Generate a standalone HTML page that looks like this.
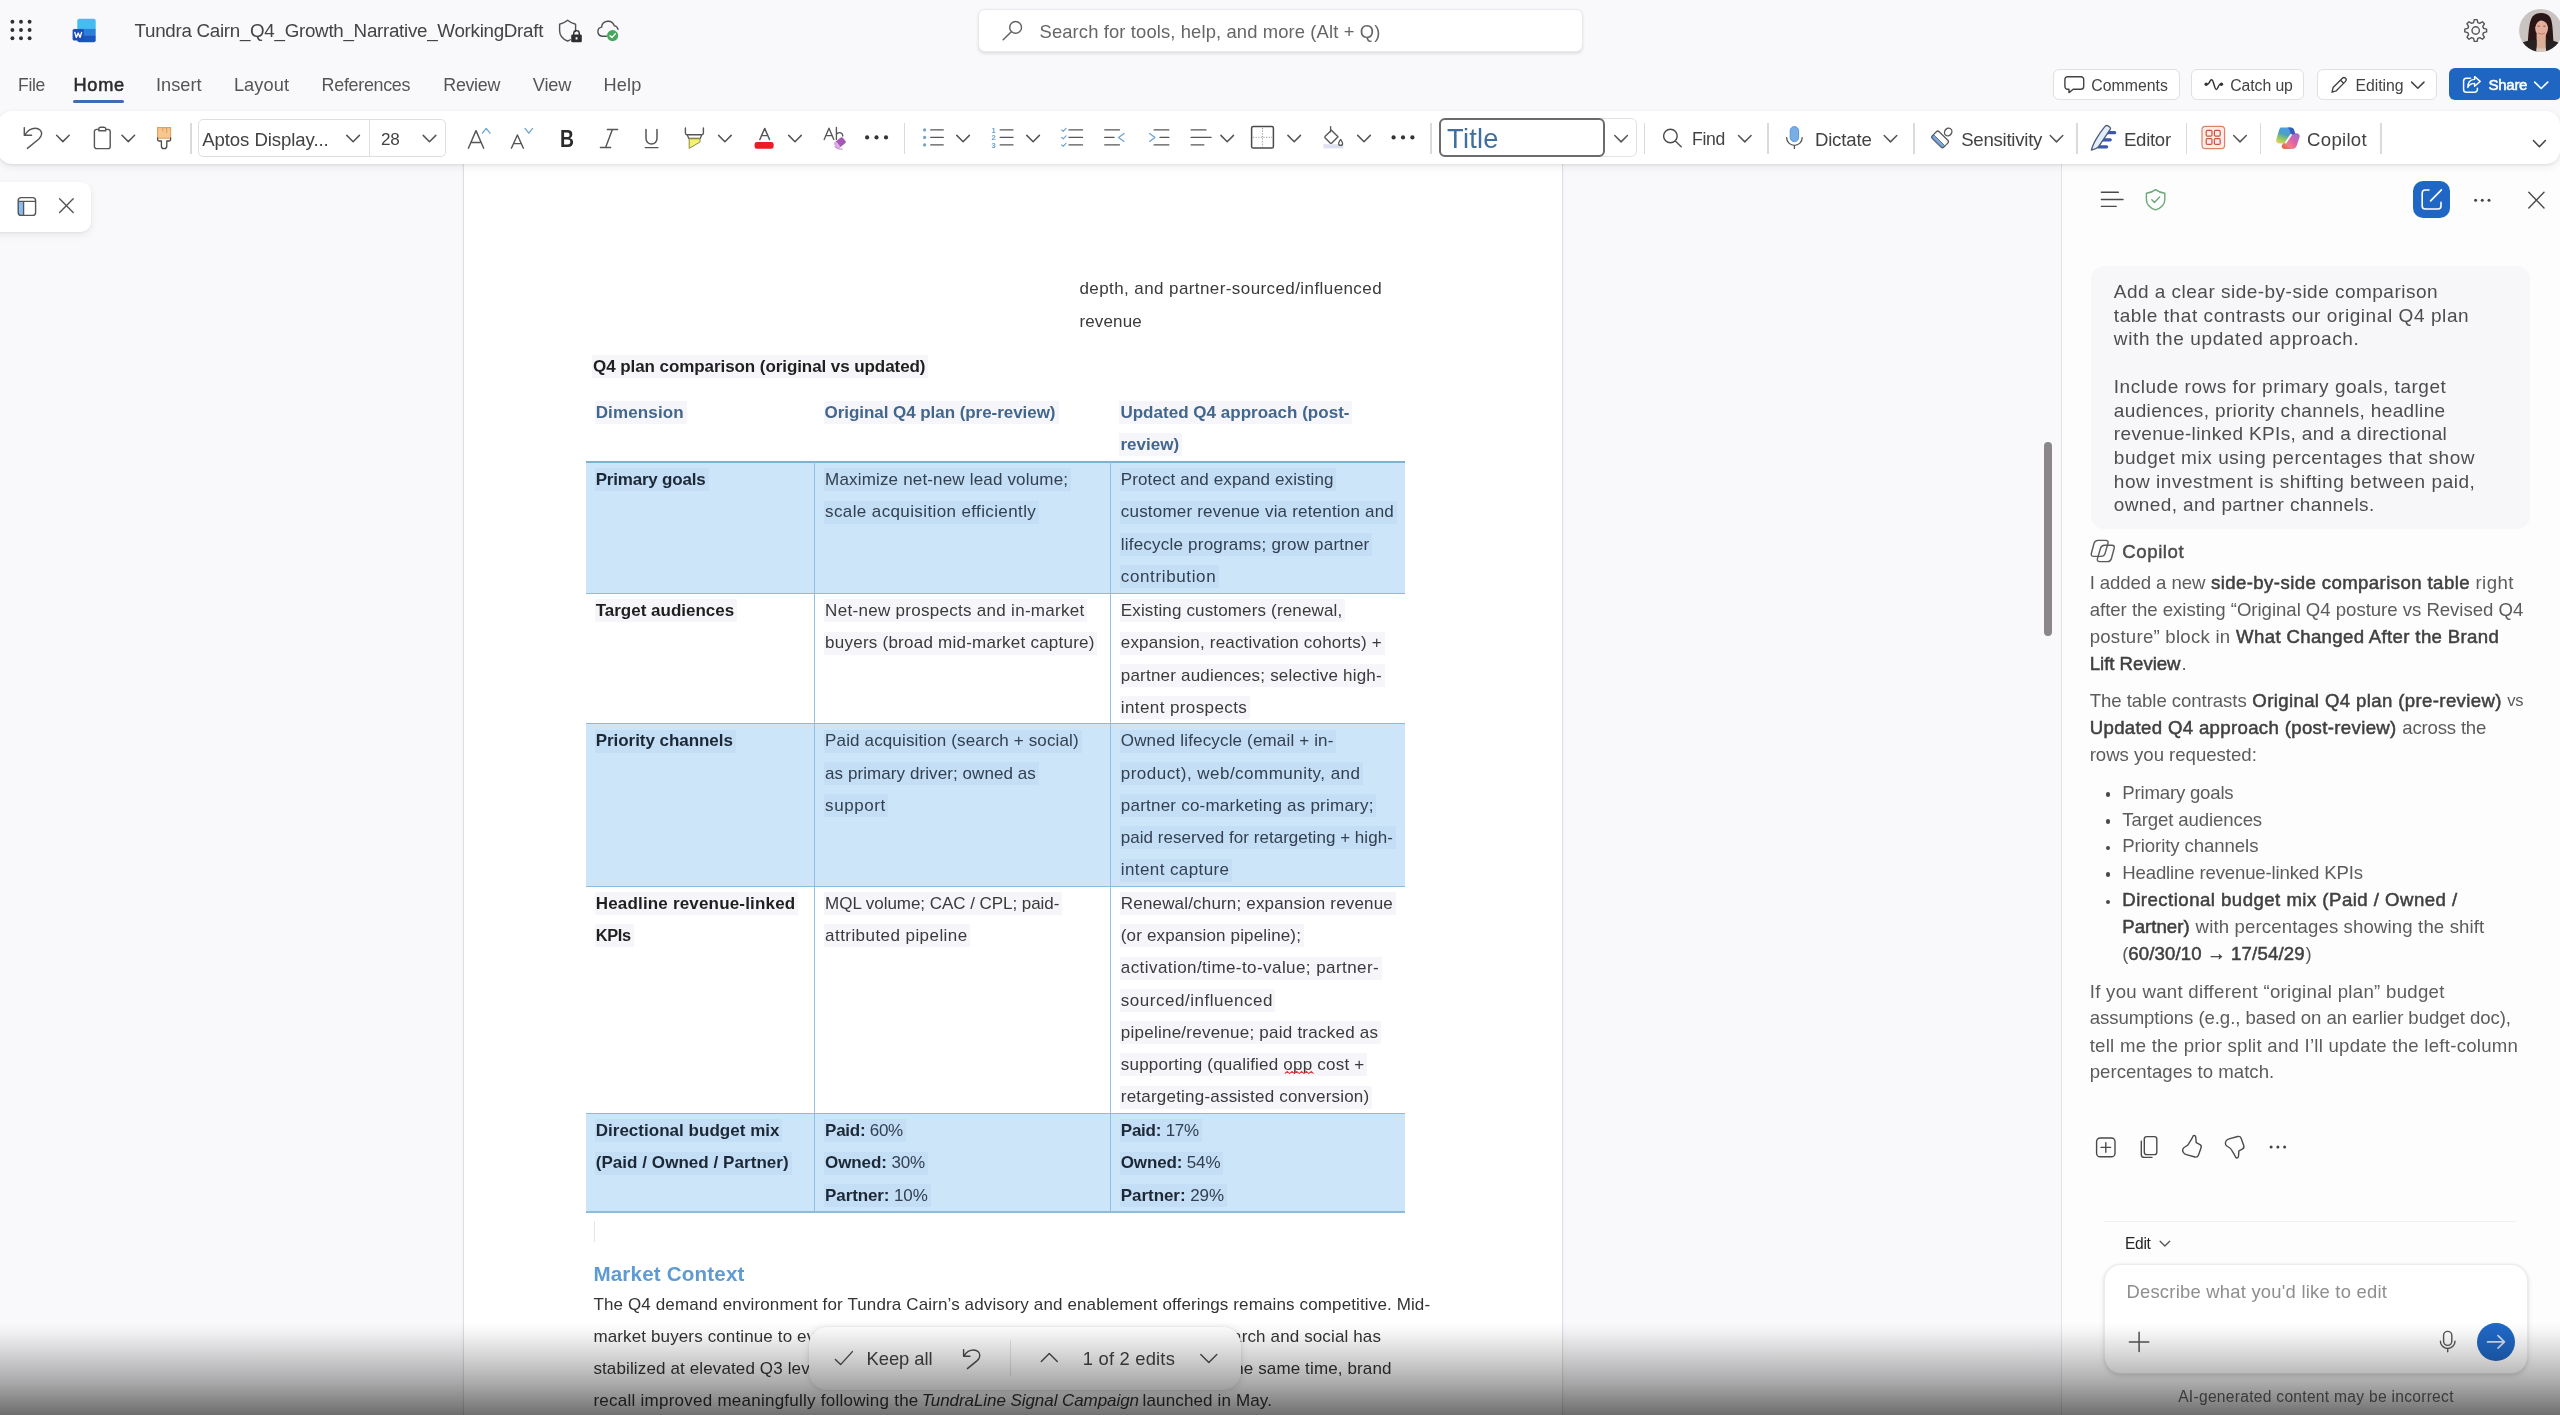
<!DOCTYPE html>
<html lang="en"><head><meta charset="utf-8"><title>Word</title>
<style>
html,body{margin:0;padding:0;background:#f9f9fb;}
body{width:2560px;height:1415px;overflow:hidden;font-family:"Liberation Sans",sans-serif;}
#root{position:relative;width:2560px;height:1415px;overflow:hidden;background:#f9f9fb;filter:blur(.45px);}
.t{position:absolute;white-space:pre;font-family:"Liberation Sans",sans-serif;}
</style></head><body><div id="root">
<div style="position:absolute;left:462.5px;top:150px;width:1100px;height:1300px;background:#fff;border-left:1px solid #dedee2;border-right:1px solid #dedee2;box-sizing:border-box;box-shadow:0 0 3px rgba(0,0,0,.05)"></div>
<div style="position:absolute;left:-12px;top:181.5px;width:103.4px;height:50px;background:#fff;border-radius:10px;box-shadow:0 1px 2px rgba(0,0,0,.05),0 3px 8px rgba(0,0,30,.07)"></div>
<div style="position:absolute;left:2043.8px;top:442.0px;width:8.3px;height:194.0px;background:#8b878b;border-radius:4.2px"></div>
<div class="t" style="left:1079.4px;top:269px;font-size:17.00px;line-height:40px;height:40px;letter-spacing:0.414px;color:#3a3a3a;">depth, and partner-sourced/influenced</div>
<div class="t" style="left:1079.4px;top:302px;font-size:17.00px;line-height:40px;height:40px;letter-spacing:0.161px;color:#3a3a3a;">revenue</div>
<div style="position:absolute;left:592.1px;top:355.4px;width:336.4px;height:23.0px;background:#f6f6fa"></div>
<div class="t" style="left:593.1px;top:347px;font-size:17.00px;line-height:40px;height:40px;letter-spacing:-0.075px;color:#1f1f1f;"><span style="font-weight:700;">Q4 plan comparison (original vs updated)</span></div>
<div style="position:absolute;left:586.0px;top:463.0px;width:819.3px;height:130.4px;background:#cde5f9;"></div>
<div style="position:absolute;left:586.0px;top:723.8px;width:819.3px;height:162.4px;background:#cde5f9;"></div>
<div style="position:absolute;left:586.0px;top:1113.6px;width:819.3px;height:98.4px;background:#cde5f9;"></div>
<div style="position:absolute;left:586.0px;top:460.6px;width:819.3px;height:2.4px;background:#7fb2cf;"></div>
<div style="position:absolute;left:586.0px;top:592.7px;width:819.3px;height:1.4px;background:#8ebbdb;"></div>
<div style="position:absolute;left:586.0px;top:723.1px;width:819.3px;height:1.4px;background:#8ebbdb;"></div>
<div style="position:absolute;left:586.0px;top:885.5px;width:819.3px;height:1.4px;background:#8ebbdb;"></div>
<div style="position:absolute;left:586.0px;top:1112.9px;width:819.3px;height:1.4px;background:#8ebbdb;"></div>
<div style="position:absolute;left:586.0px;top:1211.3px;width:819.3px;height:1.4px;background:#8ebbdb;"></div>
<div style="position:absolute;left:813.9px;top:462.0px;width:1.4px;height:750.0px;background:#93bedd;"></div>
<div style="position:absolute;left:1109.5px;top:462.0px;width:1.4px;height:750.0px;background:#93bedd;"></div>
<div style="position:absolute;left:594.7px;top:400.8px;width:92.0px;height:23.0px;background:#f6f6fa"></div>
<div class="t" style="left:595.7px;top:393px;font-size:17.00px;line-height:40px;height:40px;letter-spacing:0.137px;color:#43678c;"><span style="font-weight:700;">Dimension</span></div>
<div style="position:absolute;left:823.5px;top:400.8px;width:235.0px;height:23.0px;background:#f6f6fa"></div>
<div class="t" style="left:824.5px;top:393px;font-size:17.00px;line-height:40px;height:40px;letter-spacing:-0.050px;color:#43678c;"><span style="font-weight:700;">Original Q4 plan (pre-review)</span></div>
<div style="position:absolute;left:1119.4px;top:400.8px;width:233.1px;height:23.0px;background:#f6f6fa"></div>
<div class="t" style="left:1120.4px;top:393px;font-size:17.00px;line-height:40px;height:40px;letter-spacing:0.021px;color:#43678c;"><span style="font-weight:700;">Updated Q4 approach (post-</span></div>
<div style="position:absolute;left:1119.4px;top:433.0px;width:62.8px;height:23.0px;background:#f6f6fa"></div>
<div class="t" style="left:1120.4px;top:425px;font-size:17.00px;line-height:40px;height:40px;letter-spacing:0.035px;color:#43678c;"><span style="font-weight:700;">review)</span></div>
<div style="position:absolute;left:594.7px;top:468.2px;width:114.0px;height:23.0px;background:#c4def5"></div>
<div class="t" style="left:595.7px;top:460px;font-size:17.00px;line-height:40px;height:40px;letter-spacing:-0.204px;color:#1c2836;"><span style="font-weight:700;">Primary goals</span></div>
<div style="position:absolute;left:824.1px;top:468.2px;width:246.9px;height:23.0px;background:#c4def5"></div>
<div class="t" style="left:825.1px;top:460px;font-size:17.00px;line-height:40px;height:40px;letter-spacing:0.171px;color:#33404f;">Maximize net-new lead volume;</div>
<div style="position:absolute;left:824.1px;top:500.5px;width:214.7px;height:23.0px;background:#c4def5"></div>
<div class="t" style="left:825.1px;top:492px;font-size:17.00px;line-height:40px;height:40px;letter-spacing:0.382px;color:#33404f;">scale acquisition efficiently</div>
<div style="position:absolute;left:1119.8px;top:468.2px;width:216.6px;height:23.0px;background:#c4def5"></div>
<div class="t" style="left:1120.8px;top:460px;font-size:17.00px;line-height:40px;height:40px;letter-spacing:0.108px;color:#33404f;">Protect and expand existing</div>
<div style="position:absolute;left:1119.8px;top:500.5px;width:277.0px;height:23.0px;background:#c4def5"></div>
<div class="t" style="left:1120.8px;top:492px;font-size:17.00px;line-height:40px;height:40px;letter-spacing:0.197px;color:#33404f;">customer revenue via retention and</div>
<div style="position:absolute;left:1119.8px;top:532.8px;width:252.4px;height:23.0px;background:#c4def5"></div>
<div class="t" style="left:1120.8px;top:525px;font-size:17.00px;line-height:40px;height:40px;letter-spacing:0.211px;color:#33404f;">lifecycle programs; grow partner</div>
<div style="position:absolute;left:1119.8px;top:565.0px;width:98.8px;height:23.0px;background:#c4def5"></div>
<div class="t" style="left:1120.8px;top:557px;font-size:17.00px;line-height:40px;height:40px;letter-spacing:0.628px;color:#33404f;">contribution</div>
<div style="position:absolute;left:594.7px;top:599.3px;width:142.5px;height:23.0px;background:#f6f6fa"></div>
<div class="t" style="left:595.7px;top:591px;font-size:17.00px;line-height:40px;height:40px;letter-spacing:-0.004px;color:#1f1f1f;"><span style="font-weight:700;">Target audiences</span></div>
<div style="position:absolute;left:824.1px;top:599.3px;width:263.2px;height:23.0px;background:#f6f6fa"></div>
<div class="t" style="left:825.1px;top:591px;font-size:17.00px;line-height:40px;height:40px;letter-spacing:0.294px;color:#3a3a3a;">Net-new prospects and in-market</div>
<div style="position:absolute;left:824.1px;top:631.5px;width:273.4px;height:23.0px;background:#f6f6fa"></div>
<div class="t" style="left:825.1px;top:623px;font-size:17.00px;line-height:40px;height:40px;letter-spacing:0.240px;color:#3a3a3a;">buyers (broad mid-market capture)</div>
<div style="position:absolute;left:1119.8px;top:599.3px;width:225.4px;height:23.0px;background:#f6f6fa"></div>
<div class="t" style="left:1120.8px;top:591px;font-size:17.00px;line-height:40px;height:40px;letter-spacing:0.152px;color:#3a3a3a;">Existing customers (renewal,</div>
<div style="position:absolute;left:1119.8px;top:631.5px;width:264.8px;height:23.0px;background:#f6f6fa"></div>
<div class="t" style="left:1120.8px;top:623px;font-size:17.00px;line-height:40px;height:40px;letter-spacing:0.186px;color:#3a3a3a;">expansion, reactivation cohorts) +</div>
<div style="position:absolute;left:1119.8px;top:663.7px;width:264.8px;height:23.0px;background:#f6f6fa"></div>
<div class="t" style="left:1120.8px;top:656px;font-size:17.00px;line-height:40px;height:40px;letter-spacing:0.200px;color:#3a3a3a;">partner audiences; selective high-</div>
<div style="position:absolute;left:1119.8px;top:695.8px;width:130.0px;height:23.0px;background:#f6f6fa"></div>
<div class="t" style="left:1120.8px;top:688px;font-size:17.00px;line-height:40px;height:40px;letter-spacing:0.399px;color:#3a3a3a;">intent prospects</div>
<div style="position:absolute;left:594.7px;top:729.6px;width:141.2px;height:23.0px;background:#c4def5"></div>
<div class="t" style="left:595.7px;top:721px;font-size:17.00px;line-height:40px;height:40px;letter-spacing:-0.046px;color:#1c2836;"><span style="font-weight:700;">Priority channels</span></div>
<div style="position:absolute;left:824.1px;top:729.6px;width:257.6px;height:23.0px;background:#c4def5"></div>
<div class="t" style="left:825.1px;top:721px;font-size:17.00px;line-height:40px;height:40px;letter-spacing:0.140px;color:#33404f;">Paid acquisition (search + social)</div>
<div style="position:absolute;left:824.1px;top:761.8px;width:214.7px;height:23.0px;background:#c4def5"></div>
<div class="t" style="left:825.1px;top:754px;font-size:17.00px;line-height:40px;height:40px;letter-spacing:0.073px;color:#33404f;">as primary driver; owned as</div>
<div style="position:absolute;left:824.1px;top:794.0px;width:64.1px;height:23.0px;background:#c4def5"></div>
<div class="t" style="left:825.1px;top:786px;font-size:17.00px;line-height:40px;height:40px;letter-spacing:0.566px;color:#33404f;">support</div>
<div style="position:absolute;left:1119.8px;top:729.6px;width:216.6px;height:23.0px;background:#c4def5"></div>
<div class="t" style="left:1120.8px;top:721px;font-size:17.00px;line-height:40px;height:40px;letter-spacing:0.158px;color:#33404f;">Owned lifecycle (email + in-</div>
<div style="position:absolute;left:1119.8px;top:761.8px;width:243.2px;height:23.0px;background:#c4def5"></div>
<div class="t" style="left:1120.8px;top:754px;font-size:17.00px;line-height:40px;height:40px;letter-spacing:0.472px;color:#33404f;">product), web/community, and</div>
<div style="position:absolute;left:1119.8px;top:794.0px;width:256.6px;height:23.0px;background:#c4def5"></div>
<div class="t" style="left:1120.8px;top:786px;font-size:17.00px;line-height:40px;height:40px;letter-spacing:0.225px;color:#33404f;">partner co-marketing as primary;</div>
<div style="position:absolute;left:1119.8px;top:826.2px;width:276.0px;height:23.0px;background:#c4def5"></div>
<div class="t" style="left:1120.8px;top:818px;font-size:17.00px;line-height:40px;height:40px;letter-spacing:0.035px;color:#33404f;">paid reserved for retargeting + high-</div>
<div style="position:absolute;left:1119.8px;top:858.5px;width:112.2px;height:23.0px;background:#c4def5"></div>
<div class="t" style="left:1120.8px;top:850px;font-size:17.00px;line-height:40px;height:40px;letter-spacing:0.399px;color:#33404f;">intent capture</div>
<div style="position:absolute;left:594.7px;top:892.0px;width:203.5px;height:23.0px;background:#f6f6fa"></div>
<div class="t" style="left:595.7px;top:884px;font-size:17.00px;line-height:40px;height:40px;letter-spacing:0.179px;color:#1f1f1f;"><span style="font-weight:700;">Headline revenue-linked</span></div>
<div style="position:absolute;left:594.7px;top:924.2px;width:39.5px;height:23.0px;background:#f6f6fa"></div>
<div class="t" style="left:595.7px;top:915px;font-size:16.35px;line-height:40px;height:40px;letter-spacing:-0.283px;color:#1f1f1f;"><span style="font-weight:700;">KPIs</span></div>
<div style="position:absolute;left:824.1px;top:892.0px;width:238.3px;height:23.0px;background:#f6f6fa"></div>
<div class="t" style="left:825.1px;top:884px;font-size:17.00px;line-height:40px;height:40px;letter-spacing:-0.047px;color:#3a3a3a;">MQL volume; CAC / CPL; paid-</div>
<div style="position:absolute;left:824.1px;top:924.2px;width:146.1px;height:23.0px;background:#f6f6fa"></div>
<div class="t" style="left:825.1px;top:916px;font-size:17.00px;line-height:40px;height:40px;letter-spacing:0.438px;color:#3a3a3a;">attributed pipeline</div>
<div style="position:absolute;left:1119.8px;top:892.0px;width:276.0px;height:23.0px;background:#f6f6fa"></div>
<div class="t" style="left:1120.8px;top:884px;font-size:17.00px;line-height:40px;height:40px;letter-spacing:0.177px;color:#3a3a3a;">Renewal/churn; expansion revenue</div>
<div style="position:absolute;left:1119.8px;top:924.2px;width:184.1px;height:23.0px;background:#f6f6fa"></div>
<div class="t" style="left:1120.8px;top:916px;font-size:17.00px;line-height:40px;height:40px;letter-spacing:0.147px;color:#3a3a3a;">(or expansion pipeline);</div>
<div style="position:absolute;left:1119.8px;top:956.5px;width:261.9px;height:23.0px;background:#f6f6fa"></div>
<div class="t" style="left:1120.8px;top:948px;font-size:17.00px;line-height:40px;height:40px;letter-spacing:0.428px;color:#3a3a3a;">activation/time-to-value; partner-</div>
<div style="position:absolute;left:1119.8px;top:988.8px;width:155.6px;height:23.0px;background:#f6f6fa"></div>
<div class="t" style="left:1120.8px;top:981px;font-size:17.00px;line-height:40px;height:40px;letter-spacing:0.523px;color:#3a3a3a;">sourced/influenced</div>
<div style="position:absolute;left:1119.8px;top:1021.1px;width:261.2px;height:23.0px;background:#f6f6fa"></div>
<div class="t" style="left:1120.8px;top:1013px;font-size:17.00px;line-height:40px;height:40px;letter-spacing:0.241px;color:#3a3a3a;">pipeline/revenue; paid tracked as</div>
<div style="position:absolute;left:1119.8px;top:1053.4px;width:247.4px;height:23.0px;background:#f6f6fa"></div>
<div class="t" style="left:1120.8px;top:1045px;font-size:17.00px;line-height:40px;height:40px;letter-spacing:0.215px;color:#3a3a3a;">supporting (qualified opp cost +</div>
<div style="position:absolute;left:1119.8px;top:1085.6px;width:252.4px;height:23.0px;background:#f6f6fa"></div>
<div class="t" style="left:1120.8px;top:1077px;font-size:17.00px;line-height:40px;height:40px;letter-spacing:0.210px;color:#3a3a3a;">retargeting-assisted conversion)</div>
<div style="position:absolute;left:594.7px;top:1119.4px;width:187.8px;height:23.0px;background:#c4def5"></div>
<div class="t" style="left:595.7px;top:1111px;font-size:17.00px;line-height:40px;height:40px;letter-spacing:0.026px;color:#1c2836;"><span style="font-weight:700;">Directional budget mix</span></div>
<div style="position:absolute;left:594.7px;top:1151.6px;width:197.0px;height:23.0px;background:#c4def5"></div>
<div class="t" style="left:595.7px;top:1143px;font-size:17.00px;line-height:40px;height:40px;letter-spacing:0.054px;color:#1c2836;"><span style="font-weight:700;">(Paid / Owned / Partner)</span></div>
<div style="position:absolute;left:824.1px;top:1119.4px;width:82.1px;height:23.0px;background:#c4def5"></div>
<div class="t" style="left:825.1px;top:1111px;font-size:17.00px;line-height:40px;height:40px;letter-spacing:-0.276px;color:#33404f;"><span style="font-weight:700;color:#1c2836;">Paid:</span> 60%</div>
<div style="position:absolute;left:824.1px;top:1151.6px;width:104.1px;height:23.0px;background:#c4def5"></div>
<div class="t" style="left:825.1px;top:1143px;font-size:17.00px;line-height:40px;height:40px;letter-spacing:-0.109px;color:#33404f;"><span style="font-weight:700;color:#1c2836;">Owned:</span> 30%</div>
<div style="position:absolute;left:824.1px;top:1183.9px;width:106.7px;height:23.0px;background:#c4def5"></div>
<div class="t" style="left:825.1px;top:1176px;font-size:17.00px;line-height:40px;height:40px;letter-spacing:-0.112px;color:#33404f;"><span style="font-weight:700;color:#1c2836;">Partner:</span> 10%</div>
<div style="position:absolute;left:1119.8px;top:1119.4px;width:82.4px;height:23.0px;background:#c4def5"></div>
<div class="t" style="left:1120.8px;top:1111px;font-size:17.00px;line-height:40px;height:40px;letter-spacing:-0.239px;color:#33404f;"><span style="font-weight:700;color:#1c2836;">Paid:</span> 17%</div>
<div style="position:absolute;left:1119.8px;top:1151.6px;width:103.7px;height:23.0px;background:#c4def5"></div>
<div class="t" style="left:1120.8px;top:1143px;font-size:17.00px;line-height:40px;height:40px;letter-spacing:-0.153px;color:#33404f;"><span style="font-weight:700;color:#1c2836;">Owned:</span> 54%</div>
<div style="position:absolute;left:1119.8px;top:1183.9px;width:107.3px;height:23.0px;background:#c4def5"></div>
<div class="t" style="left:1120.8px;top:1176px;font-size:17.00px;line-height:40px;height:40px;letter-spacing:-0.058px;color:#33404f;"><span style="font-weight:700;color:#1c2836;">Partner:</span> 29%</div>
<div style="position:absolute;left:593.6px;top:1221.0px;width:1.0px;height:21.0px;background:#e4e4e8;"></div>
<div class="t" style="left:593.4px;top:1254px;font-size:20.60px;line-height:40px;height:40px;letter-spacing:0.176px;color:#5f9bd3;"><span style="font-weight:700;">Market Context</span></div>
<div class="t" style="left:593.4px;top:1285px;font-size:17.00px;line-height:40px;height:40px;letter-spacing:0.130px;color:#333;">The Q4 demand environment for Tundra Cairn’s advisory and enablement offerings remains competitive. Mid-</div>
<div class="t" style="left:593.4px;top:1317px;font-size:17.00px;line-height:40px;height:40px;letter-spacing:0.130px;color:#333;">market buyers continue to evaluate</div>
<div class="t" style="left:1213.9px;top:1317px;font-size:17.00px;line-height:40px;height:40px;letter-spacing:0.130px;color:#333;">search and social has</div>
<div class="t" style="left:593.4px;top:1349px;font-size:17.00px;line-height:40px;height:40px;letter-spacing:0.130px;color:#333;">stabilized at elevated Q3 levels</div>
<div class="t" style="left:1229.3px;top:1349px;font-size:17.00px;line-height:40px;height:40px;letter-spacing:0.130px;color:#333;">the same time, brand</div>
<div class="t" style="left:593.4px;top:1381px;font-size:17.00px;line-height:40px;height:40px;letter-spacing:0.250px;color:#333;">recall improved meaningfully following the</div>
<div class="t" style="left:921.8px;top:1381px;font-size:17.00px;line-height:40px;height:40px;letter-spacing:-0.069px;color:#333;"><span style="font-style:italic;">TundraLine Signal Campaign</span></div>
<div class="t" style="left:1142.6px;top:1381px;font-size:17.00px;line-height:40px;height:40px;letter-spacing:0.136px;color:#333;">launched in May.</div>
<svg width="2560" height="1415" viewBox="0 0 2560 1415" style="position:absolute;left:0;top:0;overflow:visible"><clipPath id="np"><rect x="18.2" y="197.6" width="17.4" height="17.8" rx="3"/></clipPath>
<rect x="18" y="201" width="5.6" height="15" fill="#86bcee" clip-path="url(#np)"/>
<rect x="18.2" y="197.6" width="17.4" height="17.8" rx="3" fill="none" stroke="#555" stroke-width="1.4"/>
<path d="M18.4 201.4 H35.4 M23.6 201.4 V215" stroke="#555" stroke-width="1.3" fill="none"/>
<path d="M59.6 198.8 L73.2 212.6 M73.2 198.8 L59.6 212.6" stroke="#555" stroke-width="1.4" stroke-linecap="round"/>
<path d="M1284.8 1073.6 L1287.2 1071.4 L1289.6 1073.6 L1292.0 1071.4 L1294.4 1073.6 L1296.8 1071.4 L1299.2 1073.6 L1301.6 1071.4 L1304.0 1073.6 L1306.4 1071.4 L1308.8 1073.6 L1311.2 1071.4 L1313.6 1073.6" fill="none" stroke="#e0393e" stroke-width="1.1"/></svg>
<div style="position:absolute;left:2060.5px;top:150px;width:520px;height:1300px;background:#fdfdfe;border-left:1px solid #e4e4e8;box-sizing:border-box"></div>
<div style="position:absolute;left:2412.6px;top:180.8px;width:37.4px;height:37.6px;background:#2067c5;border-radius:10px"></div>
<div style="position:absolute;left:2090.6px;top:265.8px;width:439px;height:263px;background:#f7f7f9;border-radius:13px"></div>
<div class="t" style="left:2113.8px;top:272px;font-size:19.00px;line-height:40px;height:40px;letter-spacing:0.482px;color:#4d4d4d;">Add a clear side-by-side comparison</div>
<div class="t" style="left:2113.8px;top:296px;font-size:19.00px;line-height:40px;height:40px;letter-spacing:0.579px;color:#4d4d4d;">table that contrasts our original Q4 plan</div>
<div class="t" style="left:2113.8px;top:319px;font-size:19.00px;line-height:40px;height:40px;letter-spacing:0.631px;color:#4d4d4d;">with the updated approach.</div>
<div class="t" style="left:2113.8px;top:367px;font-size:19.00px;line-height:40px;height:40px;letter-spacing:0.525px;color:#4d4d4d;">Include rows for primary goals, target</div>
<div class="t" style="left:2113.8px;top:391px;font-size:19.00px;line-height:40px;height:40px;letter-spacing:0.364px;color:#4d4d4d;">audiences, priority channels, headline</div>
<div class="t" style="left:2113.8px;top:414px;font-size:19.00px;line-height:40px;height:40px;letter-spacing:0.351px;color:#4d4d4d;">revenue-linked KPIs, and a directional</div>
<div class="t" style="left:2113.8px;top:438px;font-size:19.00px;line-height:40px;height:40px;letter-spacing:0.557px;color:#4d4d4d;">budget mix using percentages that show</div>
<div class="t" style="left:2113.8px;top:462px;font-size:19.00px;line-height:40px;height:40px;letter-spacing:0.539px;color:#4d4d4d;">how investment is shifting between paid,</div>
<div class="t" style="left:2113.8px;top:485px;font-size:19.00px;line-height:40px;height:40px;letter-spacing:0.373px;color:#4d4d4d;">owned, and partner channels.</div>
<div class="t" style="left:2122.3px;top:532px;font-size:18.60px;line-height:40px;height:40px;letter-spacing:0.584px;color:#4c4c4c;-webkit-text-stroke:.45px #4c4c4c;">Copilot</div>
<div class="t" style="left:2089.7px;top:563px;font-size:18.60px;line-height:40px;height:40px;letter-spacing:-0.097px;color:#5c5c5c;">I added a new</div>
<div class="t" style="left:2211.0px;top:563px;font-size:18.60px;line-height:40px;height:40px;letter-spacing:0.411px;color:#404040;-webkit-text-stroke:.5px #404040;">side-by-side comparison table</div>
<div class="t" style="left:2475.4px;top:563px;font-size:18.60px;line-height:40px;height:40px;letter-spacing:0.479px;color:#5c5c5c;">right</div>
<div class="t" style="left:2089.7px;top:590px;font-size:18.60px;line-height:40px;height:40px;letter-spacing:-0.029px;color:#5c5c5c;">after the existing “Original Q4 posture vs Revised Q4</div>
<div class="t" style="left:2089.7px;top:617px;font-size:18.60px;line-height:40px;height:40px;letter-spacing:0.252px;color:#5c5c5c;">posture” block in</div>
<div class="t" style="left:2236.1px;top:617px;font-size:18.60px;line-height:40px;height:40px;letter-spacing:0.351px;color:#404040;-webkit-text-stroke:.5px #404040;">What Changed After the Brand</div>
<div class="t" style="left:2089.7px;top:644px;font-size:18.60px;line-height:40px;height:40px;letter-spacing:-0.007px;color:#404040;-webkit-text-stroke:.5px #404040;">Lift Review</div>
<div class="t" style="left:2181.6px;top:644px;font-size:18.60px;line-height:40px;height:40px;letter-spacing:0.000px;color:#5c5c5c;">.</div>
<div class="t" style="left:2089.7px;top:681px;font-size:18.60px;line-height:40px;height:40px;letter-spacing:-0.060px;color:#5c5c5c;">The table contrasts</div>
<div class="t" style="left:2252.3px;top:681px;font-size:18.60px;line-height:40px;height:40px;letter-spacing:0.375px;color:#404040;-webkit-text-stroke:.5px #404040;">Original Q4 plan (pre-review)</div>
<div class="t" style="left:2507.2px;top:680px;font-size:16.50px;line-height:40px;height:40px;letter-spacing:-0.300px;color:#5c5c5c;">vs</div>
<div class="t" style="left:2089.7px;top:708px;font-size:18.60px;line-height:40px;height:40px;letter-spacing:0.344px;color:#404040;-webkit-text-stroke:.5px #404040;">Updated Q4 approach (post-review)</div>
<div class="t" style="left:2402.3px;top:708px;font-size:18.60px;line-height:40px;height:40px;letter-spacing:-0.190px;color:#5c5c5c;">across the</div>
<div class="t" style="left:2089.7px;top:735px;font-size:18.60px;line-height:40px;height:40px;letter-spacing:-0.016px;color:#5c5c5c;">rows you requested:</div>
<div class="t" style="left:2122.3px;top:773px;font-size:18.60px;line-height:40px;height:40px;letter-spacing:-0.192px;color:#5c5c5c;">Primary goals</div>
<div class="t" style="left:2122.3px;top:800px;font-size:18.60px;line-height:40px;height:40px;letter-spacing:-0.117px;color:#5c5c5c;">Target audiences</div>
<div class="t" style="left:2122.3px;top:826px;font-size:18.60px;line-height:40px;height:40px;letter-spacing:-0.081px;color:#5c5c5c;">Priority channels</div>
<div class="t" style="left:2122.3px;top:853px;font-size:18.60px;line-height:40px;height:40px;letter-spacing:-0.157px;color:#5c5c5c;">Headline revenue-linked KPIs</div>
<div class="t" style="left:2122.3px;top:880px;font-size:18.60px;line-height:40px;height:40px;letter-spacing:0.476px;color:#404040;-webkit-text-stroke:.5px #404040;">Directional budget mix (Paid / Owned /</div>
<div class="t" style="left:2122.3px;top:907px;font-size:18.60px;line-height:40px;height:40px;letter-spacing:0.016px;color:#404040;-webkit-text-stroke:.5px #404040;">Partner)</div>
<div class="t" style="left:2195.6px;top:907px;font-size:18.60px;line-height:40px;height:40px;letter-spacing:0.135px;color:#5c5c5c;">with percentages showing the shift</div>
<div class="t" style="left:2122.3px;top:934px;font-size:18.60px;line-height:40px;height:40px;letter-spacing:0.000px;color:#5c5c5c;">(</div>
<div class="t" style="left:2128.2px;top:934px;font-size:18.60px;line-height:40px;height:40px;letter-spacing:0.148px;color:#404040;-webkit-text-stroke:.5px #404040;">60/30/10 → 17/54/29</div>
<div class="t" style="left:2305.6px;top:934px;font-size:18.60px;line-height:40px;height:40px;letter-spacing:0.000px;color:#5c5c5c;">)</div>
<div style="position:absolute;left:2105.6px;top:792.2px;width:4.8px;height:4.8px;background:#4a4a4a;border-radius:50%"></div>
<div style="position:absolute;left:2105.6px;top:819.0px;width:4.8px;height:4.8px;background:#4a4a4a;border-radius:50%"></div>
<div style="position:absolute;left:2105.6px;top:845.7px;width:4.8px;height:4.8px;background:#4a4a4a;border-radius:50%"></div>
<div style="position:absolute;left:2105.6px;top:872.4px;width:4.8px;height:4.8px;background:#4a4a4a;border-radius:50%"></div>
<div style="position:absolute;left:2105.6px;top:899.5px;width:4.8px;height:4.8px;background:#4a4a4a;border-radius:50%"></div>
<div class="t" style="left:2089.7px;top:972px;font-size:18.60px;line-height:40px;height:40px;letter-spacing:0.300px;color:#5c5c5c;">If you want different “original plan” budget</div>
<div class="t" style="left:2089.7px;top:998px;font-size:18.60px;line-height:40px;height:40px;letter-spacing:-0.071px;color:#5c5c5c;">assumptions (e.g., based on an earlier budget doc),</div>
<div class="t" style="left:2089.7px;top:1026px;font-size:18.60px;line-height:40px;height:40px;letter-spacing:0.254px;color:#5c5c5c;">tell me the prior split and I’ll update the left-column</div>
<div class="t" style="left:2089.7px;top:1052px;font-size:18.60px;line-height:40px;height:40px;letter-spacing:0.028px;color:#5c5c5c;">percentages to match.</div>
<div style="position:absolute;left:2104.0px;top:1221.4px;width:412.0px;height:1.0px;background:#f0f0f3;"></div>
<div class="t" style="left:2124.9px;top:1224px;font-size:15.60px;line-height:40px;height:40px;letter-spacing:-0.294px;color:#242424;">Edit</div>
<div style="position:absolute;left:2104px;top:1264px;width:424px;height:110px;background:#fff;border-radius:17px;border:1px solid #ececf0;box-sizing:border-box;box-shadow:0 2px 5px rgba(0,0,0,.13),0 0 2px rgba(0,0,0,.06)"></div>
<div class="t" style="left:2126.4px;top:1272px;font-size:18.40px;line-height:40px;height:40px;letter-spacing:0.243px;color:#8e8e8e;">Describe what you'd like to edit</div>
<div style="position:absolute;left:2477px;top:1323px;width:37.8px;height:37.8px;border-radius:50%;background:#2067c5"></div>
<div class="t" style="left:2178.2px;top:1377px;font-size:15.60px;line-height:40px;height:40px;letter-spacing:0.279px;color:#666;">AI-generated content may be incorrect</div>
<svg width="2560" height="1415" viewBox="0 0 2560 1415" style="position:absolute;left:0;top:0;overflow:visible"><path d="M2101.4 192.2 H2118.4 M2101.4 199.5 H2123 M2101.4 206.4 H2116.2" fill="none" stroke="#4a4a4a" stroke-width="1.40" stroke-linecap="round" stroke-linejoin="round" />
<path d="M2155.6 189.6 C2158.4 191.8 2161.2 192.8 2164.8 193.2 V199.4 C2164.8 204.4 2161.6 207.8 2155.6 209.8 C2149.6 207.8 2146.4 204.4 2146.4 199.4 V193.2 C2150 192.8 2152.8 191.8 2155.6 189.6 Z" fill="none" stroke="#6aa874" stroke-width="1.40" stroke-linecap="round" stroke-linejoin="round" />
<path d="M2151.8 199.8 L2154.4 202.4 L2159.6 197" fill="none" stroke="#6aa874" stroke-width="1.40" stroke-linecap="round" stroke-linejoin="round" />
<path d="M2429 190 H2425.2 A3 3 0 0 0 2422.2 193 V206 A3 3 0 0 0 2425.2 209 H2438 A3 3 0 0 0 2441 206 V202.4" fill="none" stroke="#fff" stroke-width="1.60" stroke-linecap="round" stroke-linejoin="round" />
<path d="M2430.6 200.8 L2441.4 189.8" fill="none" stroke="#fff" stroke-width="1.70" stroke-linecap="round" stroke-linejoin="round" />
<circle cx="2475.6" cy="200.2" r="1.5" fill="#444"/>
<circle cx="2482.3" cy="200.2" r="1.5" fill="#444"/>
<circle cx="2489.0" cy="200.2" r="1.5" fill="#444"/>
<path d="M2528.8 192.2 L2544 208 M2544 192.2 L2528.8 208" fill="none" stroke="#4a4a4a" stroke-width="1.40" stroke-linecap="round" stroke-linejoin="round" />
<path d="M2093.99 543.50 Q2094.80 540.40 2098.00 540.40 L2105.60 540.40 Q2108.80 540.40 2107.92 543.48 L2105.08 553.32 Q2104.20 556.40 2101.00 556.40 L2093.80 556.40 Q2090.60 556.40 2091.41 553.30 Z" fill="none" stroke="#5a5a5a" stroke-width="1.40" stroke-linecap="round" stroke-linejoin="round" />
<path d="M2100.50 548.27 Q2101.40 545.20 2104.60 545.20 L2111.80 545.20 Q2115.00 545.20 2114.17 548.29 L2111.43 558.51 Q2110.60 561.60 2107.40 561.60 L2099.80 561.60 Q2096.60 561.60 2097.50 558.53 Z" fill="none" stroke="#5a5a5a" stroke-width="1.40" stroke-linecap="round" stroke-linejoin="round" />
<rect x="2096.6" y="1138" width="18.4" height="18.8" rx="3.6" fill="none" stroke="#4a4a4a" stroke-width="1.4"/>
<path d="M2105.8 1142.6 V1152.2 M2101 1147.4 H2110.6" fill="none" stroke="#4a4a4a" stroke-width="1.40" stroke-linecap="round" stroke-linejoin="round" />
<rect x="2144.3" y="1136.6" width="12.5" height="18" rx="2.4" fill="none" stroke="#4a4a4a" stroke-width="1.4"/>
<path d="M2141.3 1141.2 V1154.4 A3 3 0 0 0 2144.3 1157.4 H2152" fill="none" stroke="#4a4a4a" stroke-width="1.40" stroke-linecap="round" stroke-linejoin="round" />
<path d="M2192.6 1137 C2193.2 1135 2195.6 1135 2195.8 1137.4 L2196.2 1142.6 L2199.6 1144.4 C2201.2 1145.2 2201.6 1146.4 2201 1148 L2198.4 1155.2 C2197.8 1156.8 2196.6 1157.4 2195 1157 L2186.4 1154.6 C2183.4 1153.8 2182 1151 2183 1148.8 C2184 1146.6 2187.4 1146.4 2188.6 1144 C2190 1141.4 2191.6 1139.6 2192.6 1137 Z" fill="none" stroke="#4a4a4a" stroke-width="1.40" stroke-linecap="round" stroke-linejoin="round" />
<g transform="translate(2234.5 1147.3) scale(1 -1) translate(-2191.8 -1146.2)"><path d="M2192.6 1137 C2193.2 1135 2195.6 1135 2195.8 1137.4 L2196.2 1142.6 L2199.6 1144.4 C2201.2 1145.2 2201.6 1146.4 2201 1148 L2198.4 1155.2 C2197.8 1156.8 2196.6 1157.4 2195 1157 L2186.4 1154.6 C2183.4 1153.8 2182 1151 2183 1148.8 C2184 1146.6 2187.4 1146.4 2188.6 1144 C2190 1141.4 2191.6 1139.6 2192.6 1137 Z" fill="none" stroke="#4a4a4a" stroke-width="1.40" stroke-linecap="round" stroke-linejoin="round" /></g>
<circle cx="2271.1" cy="1147" r="1.5" fill="#444"/>
<circle cx="2277.9" cy="1147" r="1.5" fill="#444"/>
<circle cx="2284.6" cy="1147" r="1.5" fill="#444"/>
<path d="M2160.1 1241.2 L2164.9 1246.0 L2169.7 1241.2" fill="none" stroke="#555" stroke-width="1.30" stroke-linecap="round" stroke-linejoin="round"/>
<path d="M2139.1 1332.2 V1351.6 M2129.4 1341.9 H2148.8" fill="none" stroke="#555" stroke-width="1.50" stroke-linecap="round" stroke-linejoin="round" />
<rect x="2443.6" y="1331.4" width="8.2" height="14" rx="4.1" fill="none" stroke="#555" stroke-width="1.4"/>
<path d="M2440.4 1341.2 A7.3 7.3 0 0 0 2455 1341.2 M2447.7 1348.6 V1351.8" fill="none" stroke="#555" stroke-width="1.40" stroke-linecap="round" stroke-linejoin="round" />
<path d="M2487.6 1341.9 H2504 M2498 1335.6 L2504.4 1341.9 L2498 1348.2" fill="none" stroke="#cfe0fa" stroke-width="1.70" stroke-linecap="round" stroke-linejoin="round" /></svg>
<div class="t" style="left:134.5px;top:11px;font-size:18.80px;line-height:40px;height:40px;letter-spacing:-0.292px;color:#444;">Tundra Cairn_Q4_Growth_Narrative_WorkingDraft</div>
<div style="position:absolute;left:978px;top:8.5px;width:605px;height:43.5px;background:#fff;border:1px solid #e9e9ee;border-radius:7px;box-shadow:0 1.5px 3px rgba(0,0,0,.10);box-sizing:border-box"></div>
<div class="t" style="left:1039.5px;top:12px;font-size:18.40px;line-height:40px;height:40px;letter-spacing:0.123px;color:#666;">Search for tools, help, and more (Alt + Q)</div>
<div class="t" style="left:18.0px;top:65px;font-size:17.50px;line-height:40px;height:40px;letter-spacing:-0.300px;color:#555;">File</div>
<div class="t" style="left:73.4px;top:65px;font-size:18.20px;line-height:40px;height:40px;letter-spacing:0.751px;color:#2b2b2b;-webkit-text-stroke:.55px #2b2b2b;">Home</div>
<div class="t" style="left:155.9px;top:65px;font-size:18.20px;line-height:40px;height:40px;letter-spacing:0.036px;color:#555;">Insert</div>
<div class="t" style="left:233.9px;top:65px;font-size:18.20px;line-height:40px;height:40px;letter-spacing:0.091px;color:#555;">Layout</div>
<div class="t" style="left:321.6px;top:65px;font-size:17.90px;line-height:40px;height:40px;letter-spacing:-0.293px;color:#555;">References</div>
<div class="t" style="left:443.3px;top:65px;font-size:17.85px;line-height:40px;height:40px;letter-spacing:-0.305px;color:#555;">Review</div>
<div class="t" style="left:532.8px;top:65px;font-size:18.20px;line-height:40px;height:40px;letter-spacing:-0.173px;color:#555;">View</div>
<div class="t" style="left:603.4px;top:65px;font-size:18.20px;line-height:40px;height:40px;letter-spacing:0.156px;color:#555;">Help</div>
<div style="position:absolute;left:73.0px;top:100.2px;width:51.3px;height:2.8px;background:#3f6db5;border-radius:1.5px"></div>
<div style="position:absolute;left:2052.6px;top:68.6px;width:127.2px;height:31.2px;background:#fff;border:1px solid #dfdfe4;border-radius:6px;box-sizing:border-box"></div>
<div style="position:absolute;left:2191.3px;top:68.6px;width:113.2px;height:31.2px;background:#fff;border:1px solid #dfdfe4;border-radius:6px;box-sizing:border-box"></div>
<div style="position:absolute;left:2316.7px;top:68.6px;width:120.8px;height:31.2px;background:#fff;border:1px solid #dfdfe4;border-radius:6px;box-sizing:border-box"></div>
<div style="position:absolute;left:2449.3px;top:68.4px;width:111.9px;height:31.6px;background:#1f66c3;border-radius:6px"></div>
<div class="t" style="left:2091.2px;top:66px;font-size:15.80px;line-height:40px;height:40px;letter-spacing:0.059px;color:#424242;">Comments</div>
<div class="t" style="left:2230.3px;top:66px;font-size:15.80px;line-height:40px;height:40px;letter-spacing:-0.091px;color:#424242;">Catch up</div>
<div class="t" style="left:2355.5px;top:66px;font-size:15.80px;line-height:40px;height:40px;letter-spacing:-0.035px;color:#424242;">Editing</div>
<div class="t" style="left:2488.5px;top:65px;font-size:15.05px;line-height:40px;height:40px;letter-spacing:-0.290px;color:#fff;-webkit-text-stroke:.5px #fff;">Share</div>
<svg width="2560" height="1415" viewBox="0 0 2560 1415" style="position:absolute;left:0;top:0;overflow:visible"><circle cx="12.4" cy="21.8" r="1.95" fill="#303030"/>
<circle cx="12.4" cy="30.0" r="1.95" fill="#303030"/>
<circle cx="12.4" cy="38.2" r="1.95" fill="#303030"/>
<circle cx="21.0" cy="21.8" r="1.95" fill="#303030"/>
<circle cx="21.0" cy="30.0" r="1.95" fill="#303030"/>
<circle cx="21.0" cy="38.2" r="1.95" fill="#303030"/>
<circle cx="29.6" cy="21.8" r="1.95" fill="#303030"/>
<circle cx="29.6" cy="30.0" r="1.95" fill="#303030"/>
<circle cx="29.6" cy="38.2" r="1.95" fill="#303030"/>
<g><clipPath id="wc"><rect x="77.3" y="18.8" width="18.4" height="23.4" rx="2"/></clipPath><g clip-path="url(#wc)"><rect x="77" y="18" width="19" height="11" fill="#45bdf0"/><rect x="77" y="28.9" width="19" height="6.4" fill="#2c7fd8"/><rect x="77" y="35.2" width="19" height="8" fill="#1a56c0"/></g><rect x="72.6" y="28.9" width="11.2" height="11.6" rx="1.6" fill="#1d4dbc"/><path d="M74.8 32.4 L76.3 37.4 L78.2 33 L80.1 37.4 L81.6 32.4" fill="none" stroke="#fff" stroke-width="1.35" stroke-linejoin="round" stroke-linecap="round"/></g>
<path d="M575.6 31.5 V24.2 C572.5 23.6 570 22.2 567.6 20.2 C565.2 22.2 562.7 23.6 559.6 24.2 V30.5 C559.6 35.6 562.7 39.2 567.6 41 C568.6 40.6 569.5 40.2 570.2 39.7" fill="none" stroke="#505050" stroke-width="1.4" stroke-linejoin="round" stroke-linecap="round"/>
<path d="M573.7 35 V33.4 A2.8 2.8 0 0 1 579.3 33.4 V35" fill="none" stroke="#2e2e2e" stroke-width="1.4"/>
<rect x="571.2" y="34.6" width="10.6" height="7.6" rx="1.3" fill="#2e2e2e"/><rect x="575.6" y="37.2" width="1.9" height="2.3" fill="#f4f4f6"/>
<path d="M606.5 36.2 H602.2 A4.6 4.6 0 0 1 601.6 27.1 A6.5 6.5 0 0 1 614.2 25.6 A4.9 4.9 0 0 1 618 29.4" fill="none" stroke="#505050" stroke-width="1.4" stroke-linecap="round"/>
<circle cx="612.6" cy="35.6" r="5.6" fill="#43a85a"/><path d="M610 35.8 L611.9 37.6 L615.3 33.8" fill="none" stroke="#fff" stroke-width="1.4" stroke-linecap="round" stroke-linejoin="round"/>
<circle cx="1015.6" cy="27.4" r="5.9" fill="none" stroke="#616161" stroke-width="1.4"/><path d="M1011.3 31.8 L1003.2 39.8" stroke="#616161" stroke-width="1.5" stroke-linecap="round"/>
<path d="M2486.61 29.07 L2486.61 31.93 L2483.62 32.61 L2482.79 34.61 L2484.42 37.20 L2482.40 39.22 L2479.81 37.59 L2477.81 38.42 L2477.13 41.41 L2474.27 41.41 L2473.59 38.42 L2471.59 37.59 L2469.00 39.22 L2466.98 37.20 L2468.61 34.61 L2467.78 32.61 L2464.79 31.93 L2464.79 29.07 L2467.78 28.39 L2468.61 26.39 L2466.98 23.80 L2469.00 21.78 L2471.59 23.41 L2473.59 22.58 L2474.27 19.59 L2477.13 19.59 L2477.81 22.58 L2479.81 23.41 L2482.40 21.78 L2484.42 23.80 L2482.79 26.39 L2483.62 28.39 Z" fill="none" stroke="#555" stroke-width="1.4" stroke-linejoin="round"/>
<circle cx="2475.7" cy="30.5" r="3.7" fill="none" stroke="#555" stroke-width="1.4"/>
<g><clipPath id="av"><circle cx="2540.6" cy="30.4" r="21.5"/></clipPath><filter id="avf" x="-10%" y="-10%" width="120%" height="120%"><feGaussianBlur stdDeviation=".7"/></filter><circle cx="2540.6" cy="30.4" r="21.5" fill="#c9c3c1"/><g clip-path="url(#av)"><g filter="url(#avf)"><path d="M2527.5 46 C2528.5 36 2528.5 22 2532.5 16.5 C2536.5 11.8 2546.5 11.8 2550 17 C2553.5 23 2552.4 36 2554 46 Z" fill="#2a1613"/><path d="M2536.6 34 L2536.4 52 H2546 L2545.8 34 Z" fill="#dcae98"/><ellipse cx="2541.6" cy="27.6" rx="6.5" ry="9.4" fill="#e4ae9c"/><path d="M2534.4 30 C2533.6 21.5 2537 16.6 2542 16.6 C2547 16.8 2549.4 21 2548.6 29 C2547.6 23.6 2545.4 20.6 2541 20.4 C2537.4 20.8 2535.6 24.6 2534.4 30 Z" fill="#2a1613"/><path d="M2538.2 33 Q2541.6 35.4 2545 33" fill="none" stroke="#b8705e" stroke-width=".9"/><path d="M2537.6 26.2 H2539.8 M2543.4 26.2 H2545.6" stroke="#7a4a40" stroke-width=".9"/><path d="M2520 54 L2522.6 42.4 C2527 40.6 2532 39.8 2536.6 39.4 L2536.6 54 Z" fill="#262120"/><path d="M2561 54 L2558.4 42.4 C2554.6 40.8 2550.4 39.8 2545.8 39.4 L2545.8 54 Z" fill="#262120"/><path d="M2536.4 48.4 H2546 V54 H2536.4 Z" fill="#d8c6ba"/></g></g></g>
<path d="M2067.6 76.7 H2081 A2.7 2.7 0 0 1 2083.7 79.4 V86.6 A2.7 2.7 0 0 1 2081 89.3 H2073.2 L2069 92.6 V89.3 H2067.6 A2.7 2.7 0 0 1 2064.9 86.6 V79.4 A2.7 2.7 0 0 1 2067.6 76.7 Z" fill="none" stroke="#424242" stroke-width="1.4" stroke-linejoin="round"/>
<circle cx="2206.2" cy="84.2" r="1.7" fill="#333"/><circle cx="2221.4" cy="84.2" r="1.7" fill="#333"/><path d="M2207.5 84.2 C2209.5 84 2209.8 79.8 2211.6 79.8 C2213.8 79.8 2214.2 89.4 2216.4 89.4 C2218 89.4 2218.3 84.4 2220.2 84.2" fill="none" stroke="#333" stroke-width="1.5" stroke-linecap="round"/>
<path d="M2332 92.2 L2333.1 87.6 L2342.4 78.3 A2.1 2.1 0 0 1 2345.5 81.4 L2336.3 90.8 Z M2340.6 80.2 L2343.6 83.2" fill="none" stroke="#424242" stroke-width="1.35" stroke-linejoin="round"/>
<path d="M2411.6 82.1 L2417.8 88.3 L2424.0 82.1" fill="none" stroke="#424242" stroke-width="1.50" stroke-linecap="round" stroke-linejoin="round"/>
<path d="M2470.5 78.2 H2466.4 A2.8 2.8 0 0 0 2463.6 81 V89.4 A2.8 2.8 0 0 0 2466.4 92.2 H2474.6 A2.8 2.8 0 0 0 2477.4 89.4 V88.2" fill="none" stroke="#fff" stroke-width="1.5" stroke-linecap="round"/><path d="M2474.6 76.6 L2480.2 81.4 L2474.6 86.2 V83.4 C2471 83.4 2469.2 84.6 2467.8 87.4 C2467.8 82.4 2470.4 79.6 2474.6 79.4 Z" fill="none" stroke="#fff" stroke-width="1.4" stroke-linejoin="round"/>
<path d="M2534.7 82.1 L2541.2 88.5 L2547.7 82.1" fill="none" stroke="#fff" stroke-width="1.70" stroke-linecap="round" stroke-linejoin="round"/></svg>
<div style="position:absolute;left:-2px;top:111.3px;width:2562px;height:52.6px;background:#fff;border-radius:14px;box-shadow:0 1px 3px rgba(0,0,0,.08),0 3px 8px rgba(0,0,20,.07)"></div>
<div style="position:absolute;left:197.7px;top:119.4px;width:248.8px;height:37.3px;border:1px solid #dedee3;border-radius:5px;box-sizing:border-box;background:#fff"></div>
<div style="position:absolute;left:369.3px;top:120.0px;width:1.0px;height:36.2px;background:#e0e0e4;"></div>
<div class="t" style="left:202.2px;top:120px;font-size:18.60px;line-height:40px;height:40px;letter-spacing:-0.083px;color:#424242;">Aptos Display...</div>
<div class="t" style="left:381.0px;top:119px;font-size:17.15px;line-height:40px;height:40px;letter-spacing:-0.276px;color:#424242;">28</div>
<div style="position:absolute;left:190.1px;top:122.5px;width:1.6px;height:31.5px;background:#dadade;"></div>
<div style="position:absolute;left:903.9px;top:122.5px;width:1.6px;height:31.5px;background:#dadade;"></div>
<div style="position:absolute;left:1430.3px;top:122.5px;width:1.6px;height:31.5px;background:#dadade;"></div>
<div style="position:absolute;left:1643.9px;top:122.5px;width:1.6px;height:31.5px;background:#dadade;"></div>
<div style="position:absolute;left:1767.0px;top:122.5px;width:1.6px;height:31.5px;background:#dadade;"></div>
<div style="position:absolute;left:1913.0px;top:122.5px;width:1.6px;height:31.5px;background:#dadade;"></div>
<div style="position:absolute;left:2076.2px;top:122.5px;width:1.6px;height:31.5px;background:#dadade;"></div>
<div style="position:absolute;left:2185.9px;top:122.5px;width:1.6px;height:31.5px;background:#dadade;"></div>
<div style="position:absolute;left:2259.7px;top:122.5px;width:1.6px;height:31.5px;background:#dadade;"></div>
<div style="position:absolute;left:2380.3px;top:122.5px;width:1.6px;height:31.5px;background:#dadade;"></div>
<div style="position:absolute;left:1438.6px;top:118.2px;width:198.8px;height:39.2px;border:1px solid #e2e2e6;border-radius:6px;box-sizing:border-box;background:#fff"></div>
<div style="position:absolute;left:1438.6px;top:118.2px;width:166px;height:39.2px;border:2px solid #6b6b6b;border-radius:6px;box-sizing:border-box;background:#fff"></div>
<div class="t" style="left:1447.0px;top:119px;font-size:27.20px;line-height:40px;height:40px;letter-spacing:0.281px;color:#3f6f9c;">Title</div>
<div class="t" style="left:1692.1px;top:119px;font-size:17.60px;line-height:40px;height:40px;letter-spacing:-0.313px;color:#424242;">Find</div>
<div class="t" style="left:1814.9px;top:120px;font-size:18.60px;line-height:40px;height:40px;letter-spacing:-0.165px;color:#424242;">Dictate</div>
<div class="t" style="left:1961.2px;top:120px;font-size:18.60px;line-height:40px;height:40px;letter-spacing:-0.253px;color:#424242;">Sensitivity</div>
<div class="t" style="left:2124.0px;top:120px;font-size:18.60px;line-height:40px;height:40px;letter-spacing:-0.298px;color:#424242;">Editor</div>
<div class="t" style="left:2307.1px;top:120px;font-size:18.60px;line-height:40px;height:40px;letter-spacing:0.267px;color:#424242;">Copilot</div>
<div class="t" style="left:559.6px;top:119px;font-size:23.60px;line-height:40px;height:40px;letter-spacing:0.000px;color:#2b2b2b;transform:scaleX(.82);transform-origin:0 50%;"><span style="font-weight:700;">B</span></div>
<svg width="2560" height="1415" viewBox="0 0 2560 1415" style="position:absolute;left:0;top:0;overflow:visible"><path d="M24.3 127.6 V135.3 H31.6 M24.8 134.8 C27 131.4 30.6 128.2 35.2 128.2 C39.4 128.2 41.8 131 41.6 134 C41.4 136.4 40.2 137.8 38.6 139.2 L27.4 148.4" fill="none" stroke="#565656" stroke-width="1.45" stroke-linecap="round" stroke-linejoin="round" />
<path d="M56.6 135.2 L62.9 141.6 L69.2 135.2" fill="none" stroke="#555" stroke-width="1.50" stroke-linecap="round" stroke-linejoin="round"/>
<path d="M98.6 129.4 H96.6 A2.2 2.2 0 0 0 94.4 131.6 V146.4 A2.2 2.2 0 0 0 96.6 148.6 H108 A2.2 2.2 0 0 0 110.2 146.4 V131.6 A2.2 2.2 0 0 0 108 129.4 H106" fill="none" stroke="#565656" stroke-width="1.40" stroke-linecap="round" stroke-linejoin="round" />
<path d="M98.8 130.8 V129 A1.8 1.8 0 0 1 100.6 127.2 H104 A1.8 1.8 0 0 1 105.8 129 V130.8 Z" fill="none" stroke="#565656" stroke-width="1.40" stroke-linecap="round" stroke-linejoin="round" />
<path d="M122.0 135.2 L128.3 141.6 L134.6 135.2" fill="none" stroke="#555" stroke-width="1.50" stroke-linecap="round" stroke-linejoin="round"/>
<path d="M157.6 127.6 H170.6 V137 A1.2 1.2 0 0 1 169.4 138.2 H158.8 A1.2 1.2 0 0 1 157.6 137 Z" fill="#f7c88e" stroke="#e0a060" stroke-width="1.1"/>
<path d="M162.8 128 V131.6 M166.6 128 V133" stroke="#e0a060" stroke-width="1.1" fill="none"/>
<path d="M157.6 138 V139.6 A1.4 1.4 0 0 0 159 141 H161.4 V146 A2.7 2.7 0 0 0 166.8 146 V141 H169.2 A1.4 1.4 0 0 0 170.6 139.6 V138" fill="none" stroke="#4a4a4a" stroke-width="1.30" stroke-linecap="round" stroke-linejoin="round" />
<path d="M346.8 135.4 L353.1 141.8 L359.4 135.4" fill="none" stroke="#555" stroke-width="1.50" stroke-linecap="round" stroke-linejoin="round"/>
<path d="M423.2 135.4 L429.5 141.8 L435.8 135.4" fill="none" stroke="#555" stroke-width="1.50" stroke-linecap="round" stroke-linejoin="round"/>
<path d="M468.4 148.2 L476 130.6 L483.7 148.2 M471 142.4 H481" fill="none" stroke="#565656" stroke-width="1.45" stroke-linecap="round" stroke-linejoin="round" />
<path d="M482.4 133.2 L486.2 128.4 L490 133.2" fill="none" stroke="#6fa3d0" stroke-width="1.30" stroke-linecap="round" stroke-linejoin="round" />
<path d="M511.4 148.2 L517.4 135 L523.4 148.2 M513.5 143.6 H521.3" fill="none" stroke="#565656" stroke-width="1.45" stroke-linecap="round" stroke-linejoin="round" />
<path d="M525 128.4 L528.8 133.2 L532.6 128.4" fill="none" stroke="#6fa3d0" stroke-width="1.30" stroke-linecap="round" stroke-linejoin="round" />
<path d="M607.4 129.4 H617.6 M600.4 147.4 H610.6 M612.4 129.4 L605.6 147.4" fill="none" stroke="#565656" stroke-width="1.45" stroke-linecap="round" stroke-linejoin="round" />
<path d="M646 129.6 V138.6 A5.5 5.5 0 0 0 657 138.6 V129.6" fill="none" stroke="#565656" stroke-width="1.50" stroke-linecap="round" stroke-linejoin="round" />
<path d="M645.2 147.6 H658" fill="none" stroke="#565656" stroke-width="1.40" stroke-linecap="round" stroke-linejoin="round" />
<path d="M685.4 128 V133 Q685.4 134.7 687 134.7 H701.8 Q703.4 134.7 703.4 133 V128" fill="none" stroke="#565656" stroke-width="1.40" stroke-linecap="round" stroke-linejoin="round" />
<path d="M687.2 134.8 L688.8 138.4 H700.4 L701.6 134.8" fill="none" stroke="#565656" stroke-width="1.30" stroke-linecap="round" stroke-linejoin="round" />
<path d="M689.2 138.8 H700 V142 L689.2 148.4 Z" fill="#f4f272" stroke="#8e8c40" stroke-width="1" stroke-linejoin="round"/>
<path d="M718.6 135.4 L724.9 141.8 L731.2 135.4" fill="none" stroke="#555" stroke-width="1.50" stroke-linecap="round" stroke-linejoin="round"/>
<path d="M759.8 139.6 L764.7 128.4 L769.6 139.6 M761.6 135.6 H767.8" fill="none" stroke="#565656" stroke-width="1.40" stroke-linecap="round" stroke-linejoin="round" />
<rect x="754.6" y="142" width="19" height="6.8" rx="2.2" fill="#ea1c24"/>
<path d="M788.7 135.4 L795.0 141.8 L801.3 135.4" fill="none" stroke="#555" stroke-width="1.50" stroke-linecap="round" stroke-linejoin="round"/>
<path d="M824.2 139.6 L829 128.2 L833.8 139.6 M826 135.6 H832" fill="none" stroke="#565656" stroke-width="1.35" stroke-linecap="round" stroke-linejoin="round" />
<path d="M836.4 127.4 V139.6 M836.4 134.6 C837.6 131.8 842.6 131.6 842.8 136" fill="none" stroke="#565656" stroke-width="1.35" stroke-linecap="round" stroke-linejoin="round" />
<g transform="rotate(-38 840 142.8)"><rect x="834.6" y="139.2" width="10.8" height="7.2" rx="1.6" fill="#a657b7"/><rect x="834.6" y="139.2" width="3.4" height="7.2" rx="1.4" fill="#dcb0e4"/></g>
<path d="M835 146.4 C836.6 148.6 839.4 149.6 842.4 149" fill="none" stroke="#c79ad2" stroke-width="1.20" stroke-linecap="round" stroke-linejoin="round" />
<circle cx="867.1" cy="137.4" r="2.1" fill="#333"/>
<circle cx="876.5" cy="137.4" r="2.1" fill="#333"/>
<circle cx="886.0" cy="137.4" r="2.1" fill="#333"/>
<circle cx="924.6" cy="129.9" r="1.6" fill="#6fa3d0"/>
<path d="M930.8 129.9 H943.2" fill="none" stroke="#565656" stroke-width="1.40" stroke-linecap="round" stroke-linejoin="round" />
<circle cx="924.6" cy="137.4" r="1.6" fill="#6fa3d0"/>
<path d="M930.8 137.4 H943.2" fill="none" stroke="#565656" stroke-width="1.40" stroke-linecap="round" stroke-linejoin="round" />
<circle cx="924.6" cy="144.9" r="1.6" fill="#6fa3d0"/>
<path d="M930.8 144.9 H943.2" fill="none" stroke="#565656" stroke-width="1.40" stroke-linecap="round" stroke-linejoin="round" />
<path d="M956.8 135.4 L963.1 141.8 L969.4 135.4" fill="none" stroke="#555" stroke-width="1.50" stroke-linecap="round" stroke-linejoin="round"/>
<path d="M1000.2 129.9 H1012.9" fill="none" stroke="#565656" stroke-width="1.40" stroke-linecap="round" stroke-linejoin="round" />
<path d="M1000.2 137.4 H1012.9" fill="none" stroke="#565656" stroke-width="1.40" stroke-linecap="round" stroke-linejoin="round" />
<path d="M1000.2 144.9 H1012.9" fill="none" stroke="#565656" stroke-width="1.40" stroke-linecap="round" stroke-linejoin="round" />
<text x="991.4" y="132.6" font-family="Liberation Sans" font-size="7.6" font-weight="700" fill="#6fa3d0">1</text><text x="991.4" y="140.2" font-family="Liberation Sans" font-size="7.6" font-weight="700" fill="#6fa3d0">2</text><text x="991.4" y="147.8" font-family="Liberation Sans" font-size="7.6" font-weight="700" fill="#6fa3d0">3</text>
<path d="M1026.8 135.4 L1033.1 141.8 L1039.4 135.4" fill="none" stroke="#555" stroke-width="1.50" stroke-linecap="round" stroke-linejoin="round"/>
<path d="M1069 129.9 H1082.5" fill="none" stroke="#565656" stroke-width="1.40" stroke-linecap="round" stroke-linejoin="round" />
<path d="M1061.6 129.9 L1063.2 131.4 L1066 128.3" fill="none" stroke="#6fa3d0" stroke-width="1.20" stroke-linecap="round" stroke-linejoin="round" />
<path d="M1069 137.4 H1082.5" fill="none" stroke="#565656" stroke-width="1.40" stroke-linecap="round" stroke-linejoin="round" />
<path d="M1061.6 137.4 L1063.2 138.9 L1066 135.8" fill="none" stroke="#6fa3d0" stroke-width="1.20" stroke-linecap="round" stroke-linejoin="round" />
<path d="M1069 144.9 H1082.5" fill="none" stroke="#565656" stroke-width="1.40" stroke-linecap="round" stroke-linejoin="round" />
<path d="M1061.6 144.9 L1063.2 146.4 L1066 143.3" fill="none" stroke="#6fa3d0" stroke-width="1.20" stroke-linecap="round" stroke-linejoin="round" />
<path d="M1104.8 129.9 H1119.4 M1104.8 137.4 H1114 M1104.8 144.9 H1119.4" fill="none" stroke="#565656" stroke-width="1.40" stroke-linecap="round" stroke-linejoin="round" />
<path d="M1124 133.4 L1118.6 137.4 L1124 141.4" fill="none" stroke="#6fa3d0" stroke-width="1.30" stroke-linecap="round" stroke-linejoin="round" />
<path d="M1154.2 129.9 H1168.8 M1160 137.4 H1168.8 M1154.2 144.9 H1168.8" fill="none" stroke="#565656" stroke-width="1.40" stroke-linecap="round" stroke-linejoin="round" />
<path d="M1149.6 133.4 L1155 137.4 L1149.6 141.4" fill="none" stroke="#6fa3d0" stroke-width="1.30" stroke-linecap="round" stroke-linejoin="round" />
<path d="M1191.2 129.9 H1206 M1191.2 137.4 H1211 M1191.2 144.9 H1203.8" fill="none" stroke="#565656" stroke-width="1.40" stroke-linecap="round" stroke-linejoin="round" />
<path d="M1220.9 135.4 L1227.2 141.8 L1233.5 135.4" fill="none" stroke="#555" stroke-width="1.50" stroke-linecap="round" stroke-linejoin="round"/>
<rect x="1251.6" y="126.5" width="21.8" height="21.6" rx="1.6" fill="none" stroke="#4a4a4a" stroke-width="1.5"/>
<path d="M1262.5 128 V146.6 M1253 137.3 H1272" stroke="#9a9a9a" stroke-width="1" stroke-dasharray="1.2 1.4" fill="none"/>
<path d="M1287.9 135.4 L1294.2 141.8 L1300.5 135.4" fill="none" stroke="#555" stroke-width="1.50" stroke-linecap="round" stroke-linejoin="round"/>
<rect x="1323.4" y="144.2" width="20" height="4.2" fill="#dfe0f0"/>
<path d="M1330.6 126.6 V131.8 M1325 136.6 L1331.4 130.2 L1338 136.8 L1331.6 143.2 Q1331 143.6 1330.4 143.2 L1325 137.8 Q1324.6 137.2 1325 136.6 Z" fill="none" stroke="#565656" stroke-width="1.35" stroke-linecap="round" stroke-linejoin="round" />
<path d="M1340.6 139.4 C1339.6 141 1338.6 142.2 1338.6 143.4 A2 2 0 0 0 1342.6 143.4 C1342.6 142.2 1341.6 141 1340.6 139.4 Z" fill="none" stroke="#565656" stroke-width="1.20" stroke-linecap="round" stroke-linejoin="round" />
<path d="M1357.7 135.4 L1364.0 141.8 L1370.3 135.4" fill="none" stroke="#555" stroke-width="1.50" stroke-linecap="round" stroke-linejoin="round"/>
<circle cx="1393.6" cy="137.4" r="2.1" fill="#333"/>
<circle cx="1403.0" cy="137.4" r="2.1" fill="#333"/>
<circle cx="1412.4" cy="137.4" r="2.1" fill="#333"/>
<path d="M1614.8 135.5 L1621.1 141.9 L1627.4 135.5" fill="none" stroke="#555" stroke-width="1.50" stroke-linecap="round" stroke-linejoin="round"/>
<circle cx="1670.4" cy="136" r="6.8" fill="none" stroke="#4a4a4a" stroke-width="1.4"/>
<path d="M1675.4 141 L1681.2 146.8" fill="none" stroke="#565656" stroke-width="1.50" stroke-linecap="round" stroke-linejoin="round" />
<path d="M1738.5 135.5 L1744.8 141.9 L1751.1 135.5" fill="none" stroke="#555" stroke-width="1.50" stroke-linecap="round" stroke-linejoin="round"/>
<rect x="1790.2" y="126.6" width="8.4" height="15" rx="4.2" fill="#78aee6" stroke="#5b94d4" stroke-width="1"/>
<path d="M1786.6 137.6 A7.8 7.8 0 0 0 1802.2 137.6 M1794.4 145.4 V148.4" fill="none" stroke="#555" stroke-width="1.30" stroke-linecap="round" stroke-linejoin="round" />
<path d="M1884.2 135.5 L1890.5 141.9 L1896.8 135.5" fill="none" stroke="#555" stroke-width="1.50" stroke-linecap="round" stroke-linejoin="round"/>
<ellipse cx="1948.2" cy="132" rx="3.5" ry="4" transform="rotate(35 1948.2 132)" fill="none" stroke="#5a5a5a" stroke-width="1.4"/>
<g transform="rotate(45 1940.1 139.4)"><rect x="1932" y="134.6" width="16.2" height="9.6" rx="2" fill="#fff" stroke="#5a5a5a" stroke-width="1.3"/><path d="M1932.6 140.6 H1947.6 V142.2 A1.6 1.6 0 0 1 1946 143.8 H1934.2 A1.6 1.6 0 0 1 1932.6 142.2 Z" fill="#7fa6d6" stroke="#4f6fa8" stroke-width=".9"/></g>
<path d="M2050.2 135.5 L2056.5 141.9 L2062.8 135.5" fill="none" stroke="#555" stroke-width="1.50" stroke-linecap="round" stroke-linejoin="round"/>
<path d="M2107.4 132.7 H2114.6 M2102.8 139.8 H2110.2 M2098.2 146.8 H2106.6" fill="none" stroke="#3b57ae" stroke-width="3.30" stroke-linecap="round" stroke-linejoin="round" />
<path d="M2091.4 150.2 C2092.6 144.6 2098.4 134.2 2104.6 126.8 C2105.6 125.4 2107.2 125.2 2108.6 126.2 L2110.2 127.6 C2110.8 128.2 2110.6 128.8 2110.2 129.4 L2098.6 146.6 C2097.2 148.2 2094.4 149.6 2091.4 150.2 Z" fill="#e2eeff" stroke="#4a5a70" stroke-width="1.3" stroke-linejoin="round"/>
<rect x="2202" y="126.4" width="22.6" height="22.2" rx="3.4" fill="#fbece6" stroke="#d9836c" stroke-width="1.2"/>
<rect x="2206.2" y="130.4" width="5.8" height="5.8" rx="1.2" fill="none" stroke="#c8553d" stroke-width="1.2"/>
<rect x="2214.4" y="130.4" width="5.8" height="5.8" rx="1.2" fill="none" stroke="#c8553d" stroke-width="1.2"/>
<rect x="2206.2" y="138.6" width="5.8" height="5.8" rx="1.2" fill="none" stroke="#c8553d" stroke-width="1.2"/>
<rect x="2214.4" y="138.6" width="5.8" height="5.8" rx="1.2" fill="none" stroke="#c8553d" stroke-width="1.2"/>
<path d="M2233.7 135.5 L2240.0 141.9 L2246.3 135.5" fill="none" stroke="#555" stroke-width="1.50" stroke-linecap="round" stroke-linejoin="round"/>
<defs><linearGradient id="cpA" gradientUnits="userSpaceOnUse" x1="2286" y1="127" x2="2280" y2="143.5"><stop offset="0" stop-color="#4a9de8"/><stop offset=".42" stop-color="#4c9fc4"/><stop offset=".7" stop-color="#8cc862"/><stop offset="1" stop-color="#e8d060"/></linearGradient><linearGradient id="cpB" gradientUnits="userSpaceOnUse" x1="2298" y1="134" x2="2284" y2="149"><stop offset="0" stop-color="#9a70cc"/><stop offset=".4" stop-color="#d862ac"/><stop offset=".72" stop-color="#f27c8c"/><stop offset="1" stop-color="#d8683a"/></linearGradient><linearGradient id="cpC" gradientUnits="userSpaceOnUse" x1="2288" y1="127" x2="2294" y2="134"><stop offset="0" stop-color="#2a62c4"/><stop offset="1" stop-color="#4a55b8"/></linearGradient><filter id="cpf" x="-20%" y="-20%" width="140%" height="140%"><feGaussianBlur stdDeviation=".35"/></filter></defs>
<g filter="url(#cpf)"><path d="M2288.8 133.2 H2296.2 C2299 133.2 2300.2 135 2299.4 137.4 L2296.8 145.6 C2296 148 2294.6 149 2292 149 H2285 C2283 149 2281.8 147.8 2281.6 146.2 L2283.6 142 Z" fill="url(#cpB)"/><path d="M2280.2 127.4 H2290.4 C2292.6 127.4 2293.8 128.6 2294.2 130.4 L2295 133.6 H2291.6 L2286 143.4 H2279.4 C2276.8 143.4 2275.6 141.8 2276.4 139.2 L2279 130.2 C2279.6 128.2 2280.8 127.4 2280.2 127.4 Z" fill="url(#cpA)"/><path d="M2287.4 127.4 H2290.4 C2292.6 127.4 2293.8 128.6 2294.2 130.4 L2295.2 134 L2290.6 134.6 C2290.4 131.2 2289.6 128.6 2287.4 127.4 Z" fill="url(#cpC)"/><path d="M2290.8 133.8 L2292.2 134.8 L2286.2 143.6 L2284.6 142.6 Z" fill="#fff8f4"/></g>
<path d="M2533.4 140.5 L2539.4 146.7 L2545.4 140.5" fill="none" stroke="#424242" stroke-width="1.50" stroke-linecap="round" stroke-linejoin="round"/></svg>
<div style="position:absolute;left:808.5px;top:1326.6px;width:432.5px;height:63.4px;background:#fdfdfe;border-radius:18px;box-shadow:0 1px 9px rgba(0,0,0,.13),0 0 2px rgba(0,0,0,.08)"></div>
<div class="t" style="left:866.5px;top:1339px;font-size:18.40px;line-height:40px;height:40px;letter-spacing:-0.056px;color:#424242;">Keep all</div>
<div class="t" style="left:1082.8px;top:1339px;font-size:18.40px;line-height:40px;height:40px;letter-spacing:0.190px;color:#424242;">1 of 2 edits</div>
<div style="position:absolute;left:1010.4px;top:1340.0px;width:1.0px;height:36.0px;background:#e2e2e6;"></div>
<svg width="2560" height="1415" viewBox="0 0 2560 1415" style="position:absolute;left:0;top:0;overflow:visible"><path d="M835.4 1359.6 L840.6 1364.6 L852.4 1351.6" fill="none" stroke="#4a4a4a" stroke-width="1.40" stroke-linecap="round" stroke-linejoin="round"/>
<path d="M963.6 1349.6 V1356.2 H970 M964 1355.8 C966 1352.6 969.6 1350 973.6 1350 C977.6 1350 980 1352.8 979.8 1355.8 C979.6 1358 978.6 1359.4 977.2 1360.6 L967.4 1368.6" fill="none" stroke="#4a4a4a" stroke-width="1.40" stroke-linecap="round" stroke-linejoin="round"/>
<path d="M1041.3 1361.6 L1049.3 1353.6 L1057.3 1361.6" fill="none" stroke="#4a4a4a" stroke-width="1.40" stroke-linecap="round" stroke-linejoin="round"/>
<path d="M1200.8 1354.4 L1208.8 1362.4 L1216.8 1354.4" fill="none" stroke="#4a4a4a" stroke-width="1.40" stroke-linecap="round" stroke-linejoin="round"/></svg>
<div style="position:absolute;left:0;top:1322px;width:2560px;height:93px;background:linear-gradient(to bottom,rgba(0,0,0,0) 0%,rgba(0,0,0,.03) 10%,rgba(0,0,0,.14) 32%,rgba(0,0,0,.33) 66%,rgba(0,0,0,.56) 100%)"></div>
</div></body></html>
